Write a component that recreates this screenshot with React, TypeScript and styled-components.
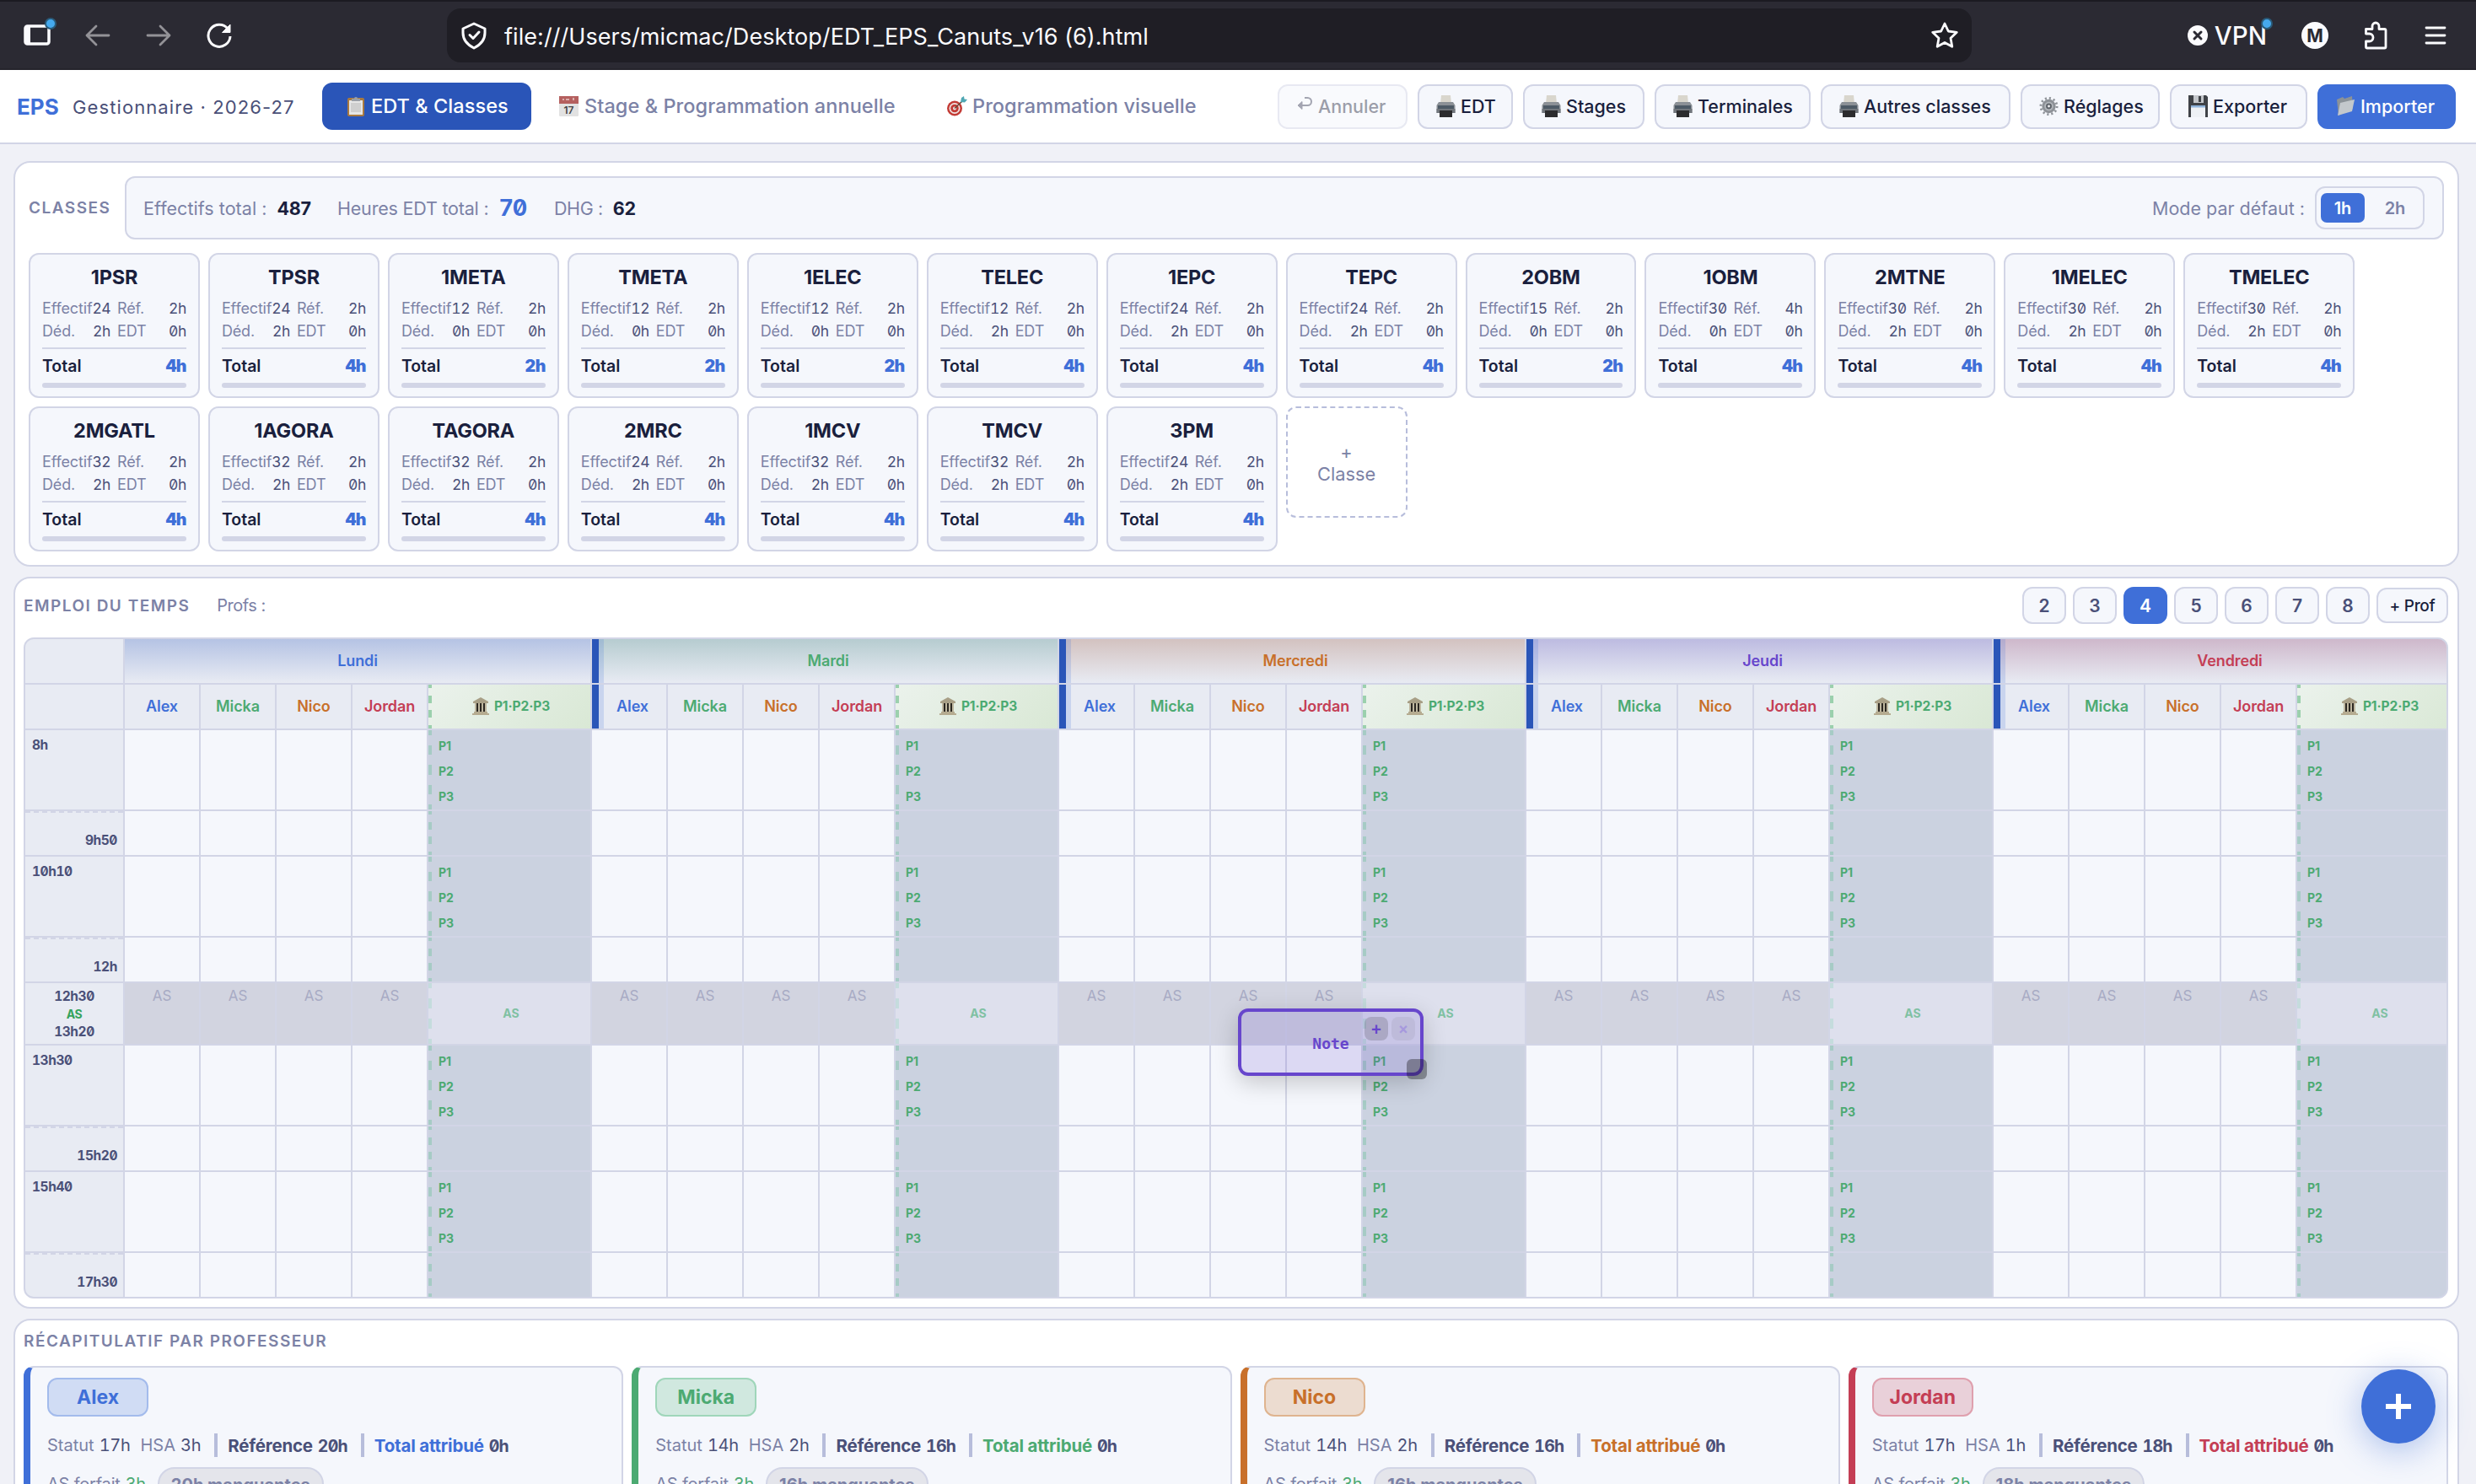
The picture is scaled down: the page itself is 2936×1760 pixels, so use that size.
import React, { useState } from "react";
import styled, { createGlobalStyle, css } from "styled-components";

const sans = `Inter, "Noto Sans", sans-serif`;
const mono = `"DejaVu Sans Mono", "Liberation Mono", monospace`;

// hours and head counts: fixed-width figures with a slashed zero
const figures = css`
  font-family: ${sans};
  font-feature-settings: "tnum" 1, "zero" 1;
`;

const GlobalStyle = createGlobalStyle`
  :root {
    --bg: #f0f1f7;
    --surface: #ffffff;
    --soft: #f5f7fc;
    --head: #e8ebf3;
    --line: #d2d5e6;
    --line-strong: #b7bddb;
    --text: #1a1f3d;
    --text-mid: #4a5078;
    --text-soft: #7c82a6;
    --blue: #3f6fd8;
    --blue-dark: #2a55b8;
    --green: #4caa72;
    --orange: #c8702a;
    --red: #c43e55;
    --violet: #6746cc;
  }
  * {
    box-sizing: border-box;
  }
  html, body {
    margin: 0;
    height: 1760px;
    overflow: hidden;
  }
  body {
    background: var(--bg);
    color: var(--text);
    font-family: ${sans};
  }
  button {
    font-family: inherit;
    padding: 0;
    margin: 0;
  }
`;

const Screen = styled.div`
  width: 2936px;
  height: 1760px;
  overflow: hidden;
  display: flex;
  flex-direction: column;
`;

/* ---------- browser toolbar ---------- */

const Toolbar = styled.div`
  flex: none;
  height: 83px;
  background: #2b2a33;
  border-top: 2px solid #1c1b22;
  border-bottom: 2px solid #25242c;
  display: flex;
  align-items: center;
  padding: 1px 33px 0 24px;
  color: #fbfbfe;
`;

const NavIcons = styled.div`
  display: flex;
  align-items: center;
  gap: 32px;
  width: 506px;
`;

const UrlBar = styled.div`
  width: 1808px;
  height: 64px;
  border-radius: 16px;
  background: #1f1e25;
  display: flex;
  align-items: center;
  padding: 0 15px 0 12px;
`;

const UrlText = styled.span`
  flex: 1;
  margin-left: 16px;
  padding-top: 2px;
  font-size: 27px;
  letter-spacing: 0.06px;
  white-space: nowrap;
`;

const BrowserTools = styled.div`
  flex: 1;
  display: flex;
  align-items: center;
  justify-content: flex-end;
  gap: 41px;
`;

const Vpn = styled.div`
  position: relative;
  display: flex;
  align-items: center;
  gap: 8px;
  font-size: 29.5px;
  font-weight: 500;
  line-height: 34px;
`;

const NoticeDot = styled.i<{ $x: number; $y: number }>`
  position: absolute;
  left: ${(p) => p.$x}px;
  top: ${(p) => p.$y}px;
  width: 14px;
  height: 14px;
  border-radius: 50%;
  background: #45a9ee;
  border: 2px solid #2a5a78;
`;

const Avatar = styled.span`
  width: 32px;
  height: 32px;
  border-radius: 50%;
  background: #fbfbfe;
  color: #2b2a33;
  font-size: 21px;
  font-weight: 700;
  display: flex;
  align-items: center;
  justify-content: center;
`;

const IconSlot = styled.span`
  position: relative;
  display: flex;
  width: 40px;
  justify-content: center;
`;

/* ---------- app header ---------- */

const Header = styled.header`
  flex: none;
  height: 88px;
  background: var(--surface);
  border-bottom: 2px solid var(--line);
  display: flex;
  align-items: center;
  padding: 0 24px 0 20px;
`;

const Brand = styled.strong`
  width: 66px;
  font-size: 26px;
  font-weight: 700;
  color: var(--blue);
`;

const Subtitle = styled.span`
  width: 296px;
  padding-top: 2px;
  font-size: 22px;
  letter-spacing: 1.1px;
  color: var(--text-mid);
  white-space: nowrap;
`;

const Tab = styled.button<{ $active?: boolean; $w: number }>`
  width: ${(p) => p.$w}px;
  height: 56px;
  margin-right: 4px;
  padding: 0 0 1px 28px;
  border: 0;
  border-radius: 12px;
  display: flex;
  align-items: center;
  gap: 6px;
  font-size: 23.5px;
  font-weight: 500;
  letter-spacing: 0.07px;
  white-space: nowrap;
  background: ${(p) => (p.$active ? "var(--blue-dark)" : "transparent")};
  color: ${(p) => (p.$active ? "#fff" : "var(--text-soft)")};
`;

const Actions = styled.div`
  margin-left: auto;
  display: flex;
  gap: 12px;
`;

const ActionButton = styled.button<{ $w: number; $primary?: boolean }>`
  width: ${(p) => p.$w}px;
  height: 53px;
  padding-left: 20px;
  border: 2px solid var(--line);
  border-radius: 12px;
  background: var(--soft);
  color: var(--text);
  display: flex;
  align-items: center;
  gap: 6px;
  font-size: 21.5px;
  font-weight: 500;
  white-space: nowrap;
  &:disabled {
    opacity: 0.5;
    color: #3a3d55;
  }
  ${(p) =>
    p.$primary &&
    css`
      background: var(--blue);
      border-color: var(--blue);
      color: #fff;
    `}
`;

/* ---------- panels ---------- */

const Main = styled.main`
  flex: 1;
  min-height: 0;
  padding: 20px 20px 0 16px;
  display: flex;
  flex-direction: column;
  gap: 12px;
`;

const Panel = styled.section<{ $h: number; $pad: string }>`
  flex: none;
  height: ${(p) => p.$h}px;
  padding: ${(p) => p.$pad};
  background: var(--surface);
  border: 2px solid var(--line);
  border-radius: 20px;
`;

const PanelTitle = styled.h2`
  margin: 0;
  font-size: 19px;
  font-weight: 600;
  letter-spacing: 1.5px;
  color: var(--text-soft);
  white-space: nowrap;
`;

const ClassesTop = styled.div`
  display: flex;
  align-items: center;
  height: 75px;
  ${PanelTitle} {
    width: 114px;
  }
`;

const StatsBar = styled.div`
  flex: 1;
  height: 75px;
  border: 2px solid var(--line);
  border-radius: 12px;
  background: var(--soft);
  display: flex;
  align-items: center;
  padding: 0 20px;
  font-size: 21.5px;
  color: var(--text-soft);
`;

const Stat = styled.span<{ $w: number; $track?: number }>`
  width: ${(p) => p.$w}px;
  display: flex;
  align-items: center;
  gap: 12px;
  white-space: nowrap;
  letter-spacing: ${(p) => p.$track ?? 0}px;
  b {
    color: var(--text);
    font-weight: 700;
    letter-spacing: -0.3px;
  }
`;

const BigHours = styled.b`
  && {
    ${figures}
    font-size: 27px;
    letter-spacing: -1px;
    color: var(--blue);
  }
`;

const ModeLabel = styled.span`
  margin-left: auto;
  margin-right: 12px;
  letter-spacing: 0;
`;

const ModeSwitch = styled.div`
  width: 130px;
  height: 51px;
  margin-right: 1px;
  border: 2px solid var(--line);
  border-radius: 12px;
  display: flex;
  align-items: center;
  padding: 0 5px;
  gap: 10px;
`;

const ModeOption = styled.button<{ $on: boolean }>`
  width: 52px;
  height: 35px;
  border: 0;
  border-radius: 7px;
  font-size: 20px;
  font-weight: 600;
  background: ${(p) => (p.$on ? "var(--blue)" : "transparent")};
  color: ${(p) => (p.$on ? "#fff" : "var(--text-soft)")};
`;

const ClassGrid = styled.div`
  margin-top: 16px;
  display: flex;
  flex-wrap: wrap;
  gap: 10px;
`;

const Card = styled.article`
  width: 202.95px;
  height: 172px;
  padding: 12px 14px 10px;
  border: 2px solid var(--line);
  border-radius: 12px;
  background: var(--soft);
  display: flex;
  flex-direction: column;
  h3 {
    margin: 0;
    height: 32px;
    line-height: 29px;
    font-size: 23.5px;
    font-weight: 700;
    text-align: center;
    letter-spacing: -0.2px;
  }
`;

const CardFigures = styled.div`
  margin-top: 6px;
  display: grid;
  grid-template-columns: 81px 82px;
  column-gap: 8px;
  grid-auto-rows: 27px;
`;

const Figure = styled.div`
  display: flex;
  justify-content: space-between;
  align-items: center;
  font-size: 18px;
  letter-spacing: -0.15px;
  color: var(--text-soft);
  span {
    ${figures}
    font-size: 17.5px;
    color: var(--text-mid);
    letter-spacing: -0.4px;
  }
`;

const CardTotal = styled.div`
  margin-top: 6px;
  height: 42px;
  border-top: 2px solid var(--line);
  display: flex;
  justify-content: space-between;
  align-items: center;
  font-size: 19.5px;
  font-weight: 600;
  b {
    ${figures}
    font-size: 19.5px;
    letter-spacing: -0.5px;
    color: var(--blue);
  }
`;

const CardBar = styled.div`
  height: 6px;
  border-radius: 3px;
  background: var(--line);
`;

const AddClass = styled.button`
  width: 144px;
  height: 132px;
  padding-top: 2px;
  border: 2px dashed var(--line-strong);
  border-radius: 12px;
  background: none;
  color: var(--text-soft);
  font-size: 21.8px;
  line-height: 26px;
`;

/* ---------- timetable ---------- */

const ScheduleTop = styled.div`
  display: flex;
  align-items: center;
  height: 44px;
`;

const ProfsLabel = styled.span`
  margin-left: 32px;
  flex: 1;
  font-size: 20px;
  letter-spacing: -0.5px;
  color: var(--text-soft);
`;

const CountButton = styled.button<{ $on: boolean }>`
  width: 52px;
  height: 44px;
  margin-right: 8px;
  border: 2px solid ${(p) => (p.$on ? "var(--blue)" : "var(--line)")};
  border-radius: 12px;
  font-size: 21px;
  font-weight: 600;
  background: ${(p) => (p.$on ? "var(--blue)" : "var(--soft)")};
  color: ${(p) => (p.$on ? "#fff" : "var(--text-mid)")};
`;

const AddProf = styled.button`
  width: 85px;
  height: 42px;
  border: 2px solid var(--line);
  border-radius: 12px;
  background: var(--soft);
  color: var(--text);
  font-size: 19px;
  font-weight: 500;
  letter-spacing: -0.3px;
`;

const TableFrame = styled.div`
  position: relative;
  margin-top: 16px;
  height: 784px;
  border: 2px solid var(--line);
  border-radius: 12px;
  overflow: hidden;
  background: var(--line);
`;

const Table = styled.div`
  display: grid;
  width: max-content;
  gap: 2px;
  grid-template-columns: 116px ${"88px 88px 88px 88px 192px ".repeat(5)};
  grid-template-rows: 52px 52px 94px 52px 94px 52px 72px 94px 52px 94px 52px;
`;

const HeadCell = styled.div<{ $color?: string; $first?: boolean }>`
  background: var(--head);
  color: ${(p) => p.$color};
  display: flex;
  align-items: center;
  justify-content: center;
  padding-bottom: 1px;
  font-size: 18px;
  font-weight: 600;
  letter-spacing: -0.1px;
  ${(p) =>
    p.$first &&
    css`
      border-left: 8px solid var(--blue-dark);
      box-shadow: inset 6px 0 0 rgba(63, 111, 216, 0.18);
    `}
`;

const DayCell = styled(HeadCell)<{ $tint: string }>`
  grid-column: span 5;
  background: linear-gradient(180deg, ${(p) => p.$tint}, var(--head));
`;

const dashes = (color: string, period: number) => css`
  repeating-linear-gradient(
    180deg,
    ${color} 0 ${period / 4}px,
    transparent ${period / 4}px ${(period * 3) / 4}px,
    ${color} ${(period * 3) / 4}px ${period}px
  ) left / 4px 100% no-repeat
`;

const PlaceHead = styled(HeadCell)`
  background: ${dashes("#9bd0ad", 52 / 3)}, linear-gradient(135deg, #ebf2ec, #d9e8d5);
  padding-left: 4px;
  color: var(--green);
  font-size: 15.5px;
  font-weight: 700;
  gap: 6px;
`;

const TimeCell = styled.div<{ $end?: boolean }>`
  background: var(--head);
  padding: 8px 7px 7px 8px;
  ${figures}
  font-size: 15.5px;
  font-weight: 700;
  line-height: 20px;
  letter-spacing: -0.4px;
  color: var(--text-mid);
  ${(p) =>
    p.$end &&
    css`
      display: flex;
      justify-content: flex-end;
      align-items: flex-end;
      border-top: 2px dashed var(--line);
    `}
`;

const BreakTime = styled(TimeCell)`
  padding: 5px 0;
  display: flex;
  flex-direction: column;
  align-items: center;
  line-height: 21px;
  em {
    font-style: normal;
    font-size: 14px;
    color: #35a35c;
  }
`;

const Slot = styled.div`
  background: var(--soft);
`;

const BreakSlot = styled.div`
  background: #d2d4e0;
  color: #a8abc4;
  text-align: center;
  font-size: 17px;
  line-height: 31px;
`;

const PlaceSlot = styled.div<{ $period: number }>`
  background: ${(p) => dashes("#a6cbc5", p.$period)}, #cbd2e0;
  padding: 4px 0 0 12px;
  color: var(--green);
  font-size: 14px;
  font-weight: 700;
  line-height: 30px;
`;

const BreakPlace = styled.div`
  background: ${dashes("#c5dcdd", 24)}, #dee0ed;
  color: #80c1a3;
  padding-left: 4px;
  font-size: 14px;
  font-weight: 700;
  line-height: 72px;
  text-align: center;
`;

const Note = styled.div`
  position: absolute;
  left: 1438px;
  top: 438px;
  width: 220px;
  height: 80px;
  padding-top: 2px;
  border: 4px solid var(--violet);
  border-radius: 12px;
  background: rgba(103, 70, 204, 0.17);
  box-shadow: 0 8px 28px rgba(0, 0, 0, 0.2);
  color: var(--violet);
  font-family: ${mono};
  font-size: 18px;
  font-weight: 700;
  display: flex;
  align-items: center;
  justify-content: center;
`;

const NoteTools = styled.div`
  position: absolute;
  top: 6px;
  right: 6px;
  display: flex;
  gap: 4px;
`;

const NoteButton = styled.button<{ $faded?: boolean }>`
  width: 28px;
  height: 28px;
  border: 0;
  border-radius: 8px;
  background: rgba(0, 0, 0, 0.15);
  color: var(--violet);
  font-family: ${mono};
  font-size: 19px;
  font-weight: 700;
  opacity: ${(p) => (p.$faded ? 0.35 : 1)};
`;

const NoteHandle = styled.span`
  position: absolute;
  right: -8px;
  bottom: -8px;
  width: 24px;
  height: 24px;
  border-radius: 6px;
  background: rgba(0, 0, 0, 0.33);
`;

/* ---------- recap ---------- */

const RecapGrid = styled.div`
  margin-top: 18px;
  display: grid;
  grid-template-columns: repeat(4, 1fr);
  gap: 10px;
`;

const RecapCard = styled.article<{ $color: string }>`
  height: 220px;
  padding: 12px 20px;
  border: 2px solid var(--line);
  border-left: 8px solid ${(p) => p.$color};
  border-radius: 12px;
  background: var(--soft);
`;

const NameBadge = styled.div<{ $color: string; $bg: string; $line: string }>`
  width: 120px;
  height: 46px;
  border: 2px solid ${(p) => p.$line};
  border-radius: 12px;
  background: ${(p) => p.$bg};
  color: ${(p) => p.$color};
  font-size: 23px;
  font-weight: 700;
  display: flex;
  align-items: center;
  justify-content: center;
`;

const RecapLine = styled.div`
  display: flex;
  align-items: center;
  height: 28px;
  margin-top: 20px;
  font-size: 20px;
  color: var(--text-soft);
  white-space: nowrap;
  span {
    ${figures}
    font-size: 20px;
    letter-spacing: -0.3px;
    color: var(--text-mid);
    margin: 0 12px 0 6px;
  }
`;

const Separator = styled.i`
  width: 4px;
  height: 28px;
  margin: 0 12px 0 4px;
  background: var(--line-strong);
`;

const Strong = styled.b<{ $color?: string }>`
  color: ${(p) => p.$color ?? "var(--text-mid)"};
  font-size: 20.5px;
  font-weight: 700;
  letter-spacing: -0.2px;
  span {
    font-size: 19.5px;
    font-weight: 700;
    letter-spacing: -0.8px;
  }
`;

const ForfaitLine = styled(RecapLine)`
  margin-top: 12px;
  height: 40px;
  letter-spacing: -0.2px;
  span {
    color: var(--green);
    margin-right: 14px;
  }
`;

const MissingPill = styled.b`
  height: 40px;
  padding: 0 14px;
  border: 2px solid var(--line);
  border-radius: 20px;
  background: #e4e5eb;
  line-height: 38px;
  letter-spacing: 0;
`;

const AddFab = styled.button`
  position: fixed;
  right: 48px;
  bottom: 48px;
  width: 88px;
  height: 88px;
  border: 0;
  border-radius: 50%;
  background: var(--blue);
  box-shadow: 0 8px 40px rgba(63, 111, 216, 0.4);
  display: flex;
  align-items: center;
  justify-content: center;
`;

/* ---------- icons ---------- */

function ClipboardIcon() {
  return (
    <svg width="24" height="26" viewBox="0 0 24 26">
      <rect x="2" y="3" width="20" height="22" rx="2" fill="#a9793f" />
      <rect x="4" y="6" width="16" height="17" fill="#e6e6e6" />
      <rect x="6" y="9" width="12" height="11" fill="#cfcfcf" />
      <path d="M7 7V4h3a2 2 0 0 1 4 0h3v3z" fill="#9a9fa6" />
    </svg>
  );
}

function CalendarIcon() {
  return (
    <svg width="25" height="26" viewBox="0 0 25 26">
      <rect x="1" y="1" width="23" height="24" rx="1.5" fill="#e2e2e2" />
      <rect x="1" y="1" width="23" height="9" fill="#b5605f" />
      <path d="M5 5h2M9 5h4M18 3v3" stroke="#e9c9c8" strokeWidth="1.5" />
      <text
        x="12.5"
        y="22"
        fontFamily="Inter"
        fontSize="12"
        fontWeight="600"
        textAnchor="middle"
        fill="#444"
      >
        17
      </text>
    </svg>
  );
}

function TargetIcon() {
  return (
    <svg width="25" height="26" viewBox="0 0 25 26">
      <circle cx="10" cy="15.500" r="9" fill="#c33b35" />
      <circle cx="10" cy="15.500" r="6.500" fill="#f0e6e4" />
      <circle cx="10" cy="15.500" r="4.800" fill="#c33b35" />
      <circle cx="10" cy="15.500" r="2" fill="#f0e6e4" />
      <path d="M10 15.500L20 6" stroke="#6b4a3a" strokeWidth="1.6" />
      <path d="M17 8l1-5 3-2 .5 3.5L25 5l-3 3.5z" fill="#4fa7b3" />
    </svg>
  );
}

function PrinterIcon() {
  return (
    <svg width="23" height="26" viewBox="0 0 23 26">
      <path d="M6 0h11l1 10H5z" fill="#d9d6cd" />
      <path d="M3 8h17l2.500 4v9H.5v-9z" fill="#8b9096" />
      <path d="M2 12h19v4H2z" fill="#4d5a66" />
      <path d="M.5 16h22v5H.5z" fill="#70757b" />
      <path d="M4 18h15v8H4z" fill="#2c2c2e" />
    </svg>
  );
}

function GearIcon() {
  return (
    <svg width="23" height="26" viewBox="0 0 24 26">
      <circle
        cx="12"
        cy="13"
        r="10"
        fill="none"
        stroke="#8f9399"
        strokeWidth="3"
        strokeDasharray="2.2 3.04"
      />
      <circle cx="12" cy="13" r="7" fill="#b4b8bd" stroke="#8d9197" strokeWidth="3" />
      <circle cx="12" cy="13" r="3.6" fill="#5f646b" />
      <circle cx="12" cy="13" r="1.5" fill="#f0f0f2" />
    </svg>
  );
}

function FloppyIcon() {
  return (
    <svg width="23" height="26" viewBox="0 0 23 26">
      <path d="M0 0h21l2 2v24H0z" fill="#3f4247" />
      <rect x="6" y="0" width="12" height="9" fill="#c3c6ca" />
      <rect x="12" y="1" width="3" height="7" fill="#3f4247" />
      <rect x="3" y="12" width="17" height="14" fill="#eef1f5" />
      <rect x="3" y="12" width="17" height="2.5" fill="#8fb4dc" />
    </svg>
  );
}

function FolderIcon() {
  return (
    <svg width="23" height="26" viewBox="0 0 23 26">
      <path d="M1 5l7-3 2 2 9-3 1 15L3 24z" fill="#8b9298" />
      <path d="M5 9l17-4-3 14L2 24z" fill="#c3c8cc" />
    </svg>
  );
}

function UndoIcon() {
  return (
    <svg width="20" height="28" viewBox="0 0 20 28" fill="none" stroke="#4a4d66" strokeWidth="2">
      <path d="M10 4h3.500a4.500 4.500 0 0 1 0 9H3" />
      <path d="M7 8.500L2 13l5 4.500z" fill="#4a4d66" strokeWidth="1" />
    </svg>
  );
}

function TempleIcon() {
  return (
    <svg width="20" height="21" viewBox="0 0 20 21">
      <path d="M10 0l9 5v2H1V5z" fill="#a89f86" />
      <rect x="3" y="7" width="14" height="10" fill="#2c2822" />
      <path d="M4 7v10M8 7v10M12 7v10M16 7v10" stroke="#cfc7ae" strokeWidth="1.8" />
      <path d="M2 17h16v2h2v2H0v-2h2z" fill="#b5ab90" />
    </svg>
  );
}

/* ---------- data ---------- */

const actions = [
  { label: "EDT", w: 113, icon: <PrinterIcon /> },
  { label: "Stages", w: 144, icon: <PrinterIcon /> },
  { label: "Terminales", w: 185, icon: <PrinterIcon /> },
  { label: "Autres classes", w: 225, icon: <PrinterIcon /> },
  { label: "Réglages", w: 165, icon: <GearIcon /> },
  { label: "Exporter", w: 163, icon: <FloppyIcon /> },
];

// name, effectif, référence, dédoublement, total
const classes: [string, number, number, number, number][] = [
  ["1PSR", 24, 2, 2, 4],
  ["TPSR", 24, 2, 2, 4],
  ["1META", 12, 2, 0, 2],
  ["TMETA", 12, 2, 0, 2],
  ["1ELEC", 12, 2, 0, 2],
  ["TELEC", 12, 2, 2, 4],
  ["1EPC", 24, 2, 2, 4],
  ["TEPC", 24, 2, 2, 4],
  ["2OBM", 15, 2, 0, 2],
  ["1OBM", 30, 4, 0, 4],
  ["2MTNE", 30, 2, 2, 4],
  ["1MELEC", 30, 2, 2, 4],
  ["TMELEC", 30, 2, 2, 4],
  ["2MGATL", 32, 2, 2, 4],
  ["1AGORA", 32, 2, 2, 4],
  ["TAGORA", 32, 2, 2, 4],
  ["2MRC", 24, 2, 2, 4],
  ["1MCV", 32, 2, 2, 4],
  ["TMCV", 32, 2, 2, 4],
  ["3PM", 24, 2, 2, 4],
];

const days = [
  { name: "Lundi", color: "var(--blue)", tint: "#b5c3e4" },
  { name: "Mardi", color: "var(--green)", tint: "#b6ccd0" },
  { name: "Mercredi", color: "var(--orange)", tint: "#d3c2c0" },
  { name: "Jeudi", color: "var(--violet)", tint: "#bdbbe1" },
  { name: "Vendredi", color: "var(--red)", tint: "#ceb8cb" },
];

const profs = [
  { name: "Alex", color: "var(--blue)", bg: "#d0dcf4", line: "#a3bbec", statut: 17, hsa: 3, ref: 20 },
  { name: "Micka", color: "var(--green)", bg: "#d0e8df", line: "#9fd6ba", statut: 14, hsa: 2, ref: 16 },
  { name: "Nico", color: "var(--orange)", bg: "#ecdcd0", line: "#dfb48f", statut: 14, hsa: 2, ref: 16 },
  { name: "Jordan", color: "var(--red)", bg: "#e9d0d9", line: "#dfa0ae", statut: 17, hsa: 1, ref: 18 },
];

const rows = [
  { kind: "start", label: "8h" },
  { kind: "end", label: "9h50" },
  { kind: "start", label: "10h10" },
  { kind: "end", label: "12h" },
  { kind: "break", label: "" },
  { kind: "start", label: "13h30" },
  { kind: "end", label: "15h20" },
  { kind: "start", label: "15h40" },
  { kind: "end", label: "17h30" },
];

/* ---------- components ---------- */

function BrowserBar() {
  return (
    <Toolbar>
      <NavIcons>
        <IconSlot>
          <svg width="32" height="26" viewBox="0 0 32 26">
            <rect x="2" y="2" width="28" height="21" rx="2.500" fill="none" stroke="#fbfbfe" strokeWidth="3.500" />
            <rect x="2" y="2" width="6" height="21" fill="#fbfbfe" />
          </svg>
          <NoticeDot $x={29} $y={-8} />
        </IconSlot>
        <IconSlot>
          <svg width="30" height="26" viewBox="0 0 30 26" fill="none" stroke="#939297" strokeWidth="2.800" strokeLinecap="round" strokeLinejoin="round">
            <path d="M28 13H2M13 2L2 13l11 11" />
          </svg>
        </IconSlot>
        <IconSlot>
          <svg width="30" height="26" viewBox="0 0 30 26" fill="none" stroke="#939297" strokeWidth="2.800" strokeLinecap="round" strokeLinejoin="round">
            <path d="M2 13h26M17 2l11 11-11 11" />
          </svg>
        </IconSlot>
        <IconSlot>
          <svg width="30" height="30" viewBox="0 0 30 30" fill="none" stroke="#fbfbfe" strokeWidth="3">
            <path d="M25 7a13 13 0 1 0 3 9" />
            <path d="M28 2v9.500h-9.500z" fill="#fbfbfe" strokeWidth="1" />
          </svg>
        </IconSlot>
      </NavIcons>
      <UrlBar>
        <IconSlot>
          <svg width="30" height="33" viewBox="0 0 30 33" fill="none" stroke="#fbfbfe" strokeWidth="3" strokeLinejoin="round" strokeLinecap="round">
            <path d="M15 2L28 8v5c0 9-5 14-13 18C7 27 2 22 2 13V8z" />
            <path d="M10 15.500l4 4 7-7.500" />
          </svg>
        </IconSlot>
        <UrlText>file:///Users/micmac/Desktop/EDT_EPS_Canuts_v16 (6).html</UrlText>
        <svg width="34" height="32" viewBox="0 0 34 32" fill="none" stroke="#fbfbfe" strokeWidth="2.800" strokeLinejoin="round">
          <path d="M17 2l4.300 9 10 1.300-7.300 7 1.800 10L17 24.500 8.200 29.300l1.800-10-7.300-7 10-1.300z" />
        </svg>
      </UrlBar>
      <BrowserTools>
        <Vpn>
          <svg width="24" height="24" viewBox="0 0 24 24">
            <circle cx="12" cy="12" r="12" fill="#fbfbfe" />
            <path d="M8 8l8 8M16 8l-8 8" stroke="#2b2a33" strokeWidth="3" strokeLinecap="round" />
          </svg>
          VPN
          <NoticeDot $x={87} $y={-4} />
        </Vpn>
        <Avatar>M</Avatar>
        <svg width="30" height="34" viewBox="0 0 30 34" fill="none" stroke="#fbfbfe" strokeWidth="2.800" strokeLinejoin="round">
          <path d="M3.500 9.500H11V6a4 4 0 0 1 8 0v3.500h6.500a1.500 1.500 0 0 1 1.500 1.500v19.500a1.500 1.500 0 0 1-1.500 1.500H5a1.500 1.500 0 0 1-1.500-1.500V24h4a4.500 4.500 0 0 0 0-9h-4z" />
        </svg>
        <svg width="30" height="22" viewBox="0 0 30 22" stroke="#fbfbfe" strokeWidth="2.800" strokeLinecap="round">
          <path d="M4 2h22M4 11h22M4 20h22" />
        </svg>
      </BrowserTools>
    </Toolbar>
  );
}

function ClassCard({ data }: { data: [string, number, number, number, number] }) {
  const [name, size, ref, split, total] = data;
  return (
    <Card>
      <h3>{name}</h3>
      <CardFigures>
        <Figure>
          Effectif<span>{size}</span>
        </Figure>
        <Figure>
          Réf.<span>{ref}h</span>
        </Figure>
        <Figure>
          Déd.<span>{split}h</span>
        </Figure>
        <Figure>
          EDT<span>0h</span>
        </Figure>
      </CardFigures>
      <CardTotal>
        Total<b>{total}h</b>
      </CardTotal>
      <CardBar />
    </Card>
  );
}

function ScheduleRow({ kind, label }: { kind: string; label: string }) {
  return (
    <>
      {kind === "break" ? (
        <BreakTime>
          12h30<em>AS</em>13h20
        </BreakTime>
      ) : (
        <TimeCell $end={kind === "end"}>{label}</TimeCell>
      )}
      {days.map((day) => (
        <React.Fragment key={day.name}>
          {profs.map((p) =>
            kind === "break" ? <BreakSlot key={p.name}>AS</BreakSlot> : <Slot key={p.name} />
          )}
          {kind === "break" ? (
            <BreakPlace>AS</BreakPlace>
          ) : (
            <PlaceSlot $period={kind === "start" ? 94 / 4 : 52 / 3}>
              {kind === "start" && ["P1", "P2", "P3"].map((p) => <div key={p}>{p}</div>)}
            </PlaceSlot>
          )}
        </React.Fragment>
      ))}
    </>
  );
}

function App() {
  const [profCount, setProfCount] = useState(4);
  const [mode, setMode] = useState("1h");

  return (
    <Screen>
      <GlobalStyle />
      <BrowserBar />
      <Header>
        <Brand>EPS</Brand>
        <Subtitle>Gestionnaire · 2026-27</Subtitle>
        <Tab $active $w={248}>
          <ClipboardIcon />
          EDT &amp; Classes
        </Tab>
        <Tab $w={456}>
          <CalendarIcon />
          Stage &amp; Programmation annuelle
        </Tab>
        <Tab $w={352}>
          <TargetIcon />
          Programmation visuelle
        </Tab>
        <Actions>
          <ActionButton $w={154} disabled>
            <UndoIcon />
            Annuler
          </ActionButton>
          {actions.map((a) => (
            <ActionButton key={a.label} $w={a.w}>
              {a.icon}
              {a.label}
            </ActionButton>
          ))}
          <ActionButton $w={164} $primary>
            <FolderIcon />
            Importer
          </ActionButton>
        </Actions>
      </Header>

      <Main>
        <Panel $h={481} $pad="16px">
          <ClassesTop>
            <PanelTitle>CLASSES</PanelTitle>
            <StatsBar>
              <Stat $w={230} $track={0.05}>
                Effectifs total : <b>487</b>
              </Stat>
              <Stat $w={257} $track={-0.2}>
                Heures EDT total : <BigHours>70</BigHours>
              </Stat>
              <Stat $w={120} $track={-0.4}>
                DHG : <b>62</b>
              </Stat>
              <ModeLabel>Mode par défaut :</ModeLabel>
              <ModeSwitch>
                {["1h", "2h"].map((m) => (
                  <ModeOption key={m} $on={m === mode} onClick={() => setMode(m)}>
                    {m}
                  </ModeOption>
                ))}
              </ModeSwitch>
            </StatsBar>
          </ClassesTop>
          <ClassGrid>
            {classes.map((c) => (
              <ClassCard key={c[0]} data={c} />
            ))}
            <AddClass>
              +<br />
              Classe
            </AddClass>
          </ClassGrid>
        </Panel>

        <Panel $h={868} $pad="10px 11px 10px 10px">
          <ScheduleTop>
            <PanelTitle>EMPLOI DU TEMPS</PanelTitle>
            <ProfsLabel>Profs :</ProfsLabel>
            {[2, 3, 4, 5, 6, 7, 8].map((n) => (
              <CountButton key={n} $on={n === profCount} onClick={() => setProfCount(n)}>
                {n}
              </CountButton>
            ))}
            <AddProf>+ Prof</AddProf>
          </ScheduleTop>
          <TableFrame>
            <Table>
              <HeadCell />
              {days.map((day, i) => (
                <DayCell key={day.name} $color={day.color} $tint={day.tint} $first={i > 0}>
                  {day.name}
                </DayCell>
              ))}
              <HeadCell />
              {days.map((day, i) => (
                <React.Fragment key={day.name}>
                  {profs.map((p, j) => (
                    <HeadCell key={p.name} $color={p.color} $first={i > 0 && j === 0}>
                      {p.name}
                    </HeadCell>
                  ))}
                  <PlaceHead>
                    <TempleIcon />
                    P1·P2·P3
                  </PlaceHead>
                </React.Fragment>
              ))}
              {rows.map((row) => (
                <ScheduleRow key={row.label} {...row} />
              ))}
            </Table>
            <Note>
              Note
              <NoteTools>
                <NoteButton>+</NoteButton>
                <NoteButton $faded>×</NoteButton>
              </NoteTools>
              <NoteHandle />
            </Note>
          </TableFrame>
        </Panel>

        <Panel $h={300} $pad="13px 11px 10px 10px">
          <PanelTitle>RÉCAPITULATIF PAR PROFESSEUR</PanelTitle>
          <RecapGrid>
            {profs.map((p) => (
              <RecapCard key={p.name} $color={p.color}>
                <NameBadge $color={p.color} $bg={p.bg} $line={p.line}>
                  {p.name}
                </NameBadge>
                <RecapLine>
                  Statut<span>{p.statut}h</span>
                  HSA<span>{p.hsa}h</span>
                  <Separator />
                  <Strong>
                    Référence<span>{p.ref}h</span>
                  </Strong>
                  <Separator />
                  <Strong $color={p.color}>
                    Total attribué<span>0h</span>
                  </Strong>
                </RecapLine>
                <ForfaitLine>
                  AS forfait<span>3h</span>
                  <MissingPill>{p.ref}h manquantes</MissingPill>
                </ForfaitLine>
              </RecapCard>
            ))}
          </RecapGrid>
        </Panel>
      </Main>
      <AddFab>
        <svg width="32" height="32" viewBox="0 0 32 32" stroke="#fff" strokeWidth="6">
          <path d="M16 1v30M1 16h30" />
        </svg>
      </AddFab>
    </Screen>
  );
}

export default App;
